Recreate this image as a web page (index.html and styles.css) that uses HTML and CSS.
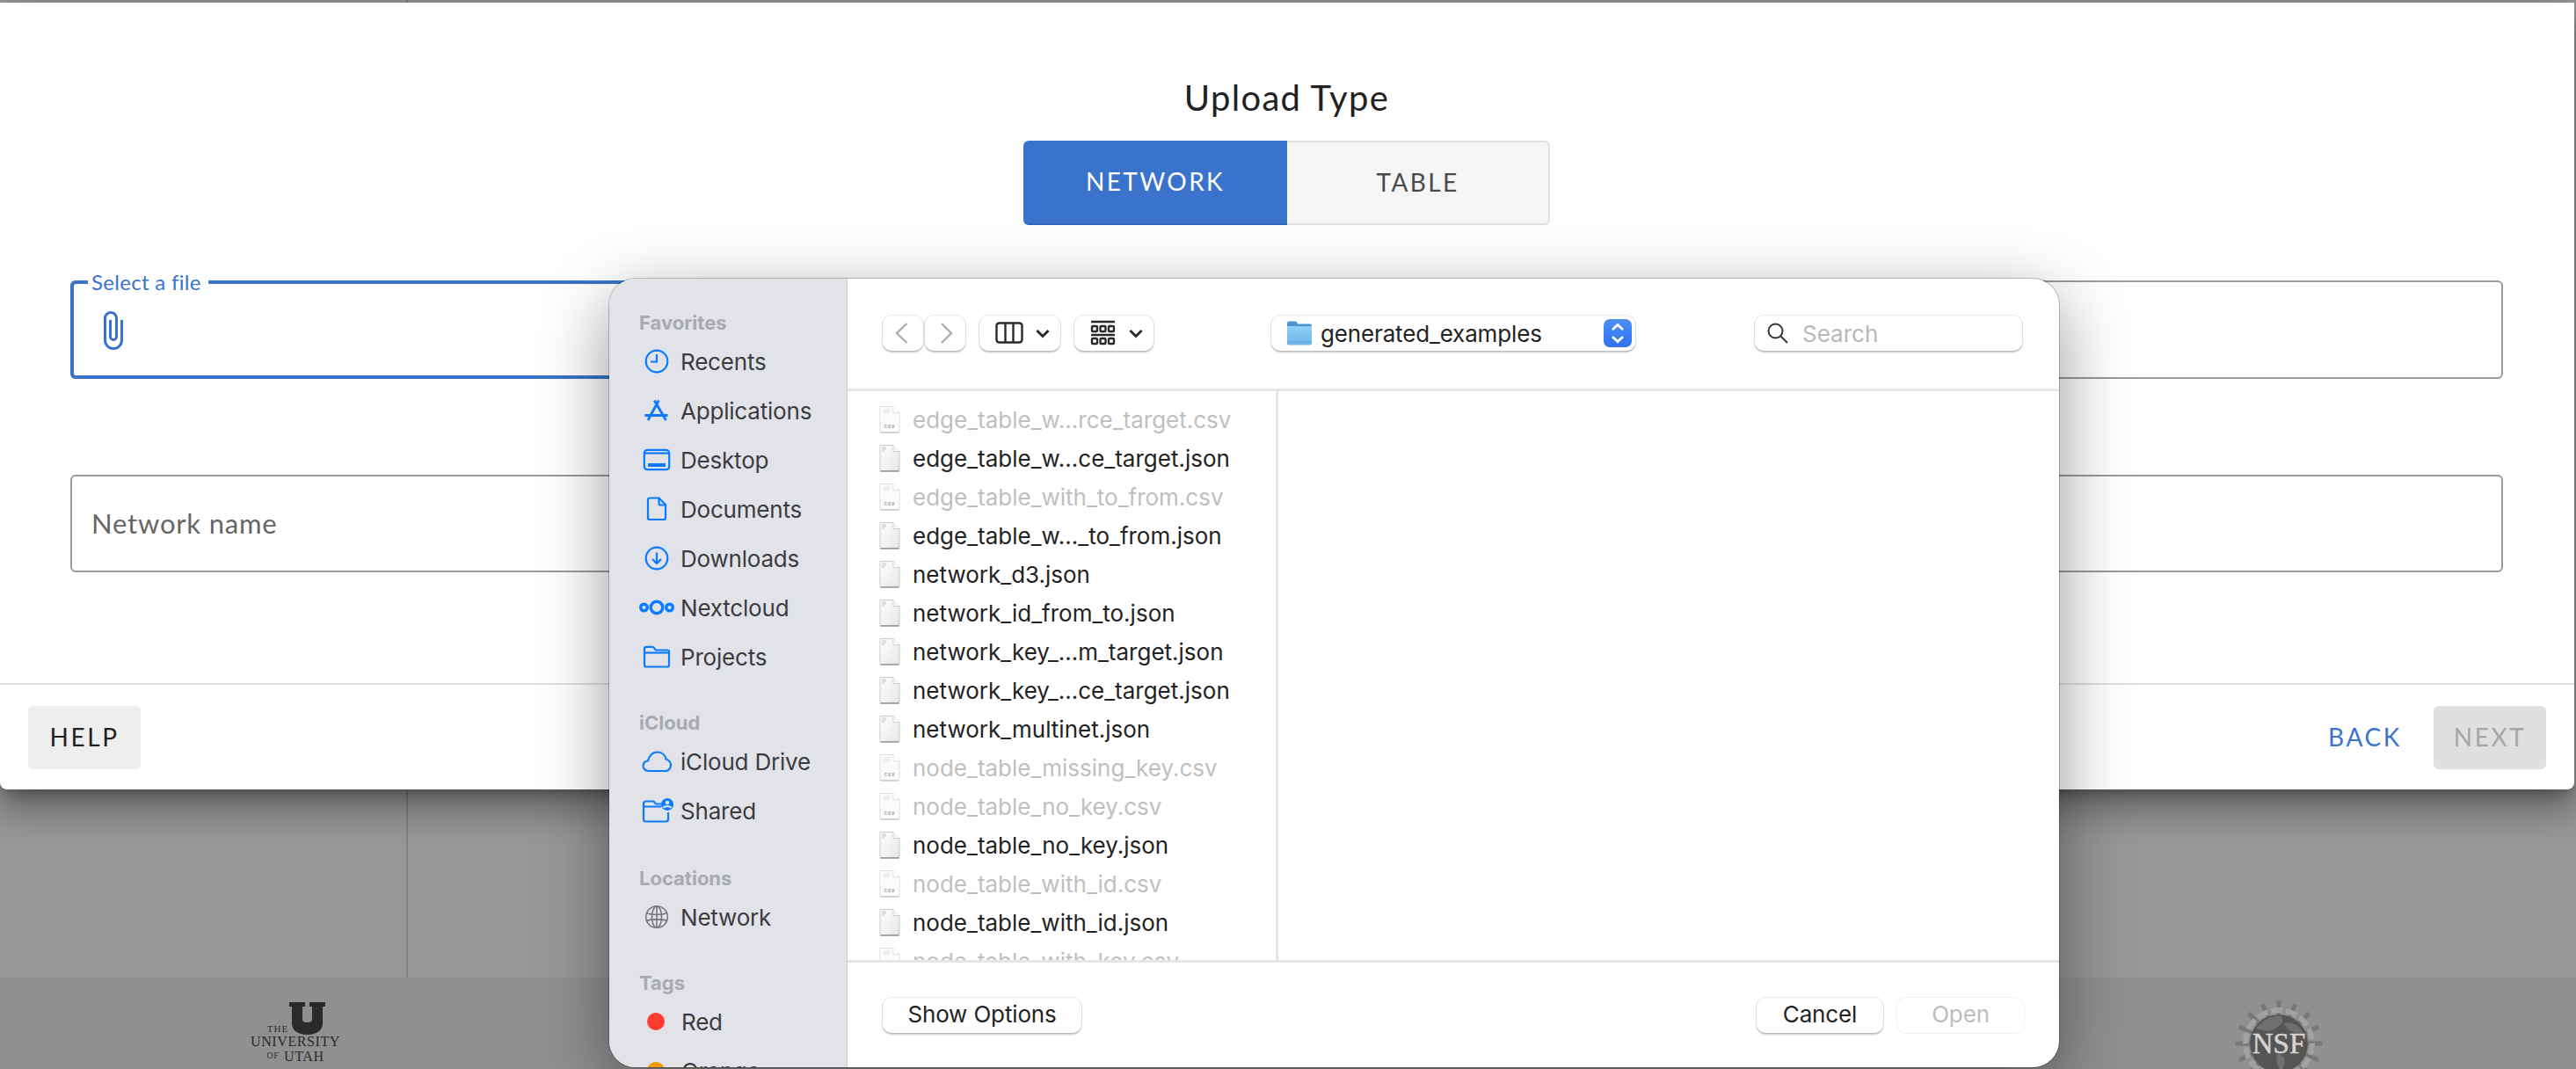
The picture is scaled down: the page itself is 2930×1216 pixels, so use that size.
FILE: index.html
```html
<!DOCTYPE html>
<html lang="en">
<head>
<meta charset="utf-8">
<title>Upload</title>
<link rel="stylesheet" href="styles.css">
</head>
<body>
<svg class="defs" width="0" height="0" aria-hidden="true">
  <defs>
    <linearGradient id="paper" x1="0" y1="0" x2="1" y2="1"><stop offset="0" stop-color="#ffffff"/><stop offset="1" stop-color="#e6e6e6"/></linearGradient>
    <linearGradient id="folderg" x1="0" y1="0" x2="0" y2="1"><stop offset="0" stop-color="#8fd0f7"/><stop offset="1" stop-color="#6db5ec"/></linearGradient>
    <symbol id="doc" viewBox="0 0 24 32">
      <path d="M1 1.500H16L23 8.500V30.500H1Z" fill="url(#paper)" stroke="#c9c9c9" stroke-width="1"/>
      <path d="M16 1.500V8.500H23" fill="#fafafa" stroke="#cfcfcf" stroke-width="1"/>
      <path d="M1.500 31H22.500" stroke="#8e8e8e" stroke-width="1.400"/>
      <path d="M3 4H8M3 6H8M3 8H6" stroke="#c4c4c4" stroke-width="1"/>
    </symbol>
    <symbol id="csv" viewBox="0 0 24 32">
      <path d="M1 1.500H16L23 8.500V30.500H1Z" fill="#fbfbfb" stroke="#dedede" stroke-width="1"/>
      <path d="M16 1.500V8.500H23" fill="#fff" stroke="#e2e2e2" stroke-width="1"/>
      <path d="M1.500 31H22.500" stroke="#c9c9c9" stroke-width="1.400"/>
      <path d="M5 5H13M5 7H13M5 9H11" stroke="#e4e4e4" stroke-width="1"/>
      <text class="csv-tag" x="12" y="26" text-anchor="middle">csv</text>
    </symbol>
  </defs>
</svg>

<div class="app">
  <main class="app-main"><div class="app-rail"></div></main>
  <footer class="app-footer">
    <div class="utah">
      <div class="utah-top">
        <span class="utah-the">THE</span>
        <svg class="utah-u" viewBox="0 0 41 37"><path d="M0 0H18V5H15V20C15 22 17 23 20.500 23C24 23 26 22 26 20V5H23V0H41V5H38V24C38 32 31 37 20.500 37C10 37 3 32 3 24V5H0Z" fill="#2a2a2a"/></svg>
      </div>
      <div class="utah-line">UNIVERSITY</div>
      <div class="utah-line"><small>OF</small> UTAH</div>
    </div>
    <svg class="nsf" viewBox="0 0 100 100">
      <g stroke="#777" stroke-width="5" stroke-linecap="round">
        <path d="M50 3V16M50 97V84M3 50H16M97 50H84M17 17L27 27M83 83L73 73M83 17L73 27M17 83L27 73"/>
        <path d="M32 7L37 18M68 93L63 82M68 7L63 18M32 93L37 82M7 32L18 37M93 68L82 63M7 68L18 63M93 32L82 37"/>
      </g>
      <circle cx="50" cy="50" r="38" fill="none" stroke="#a2a2a2" stroke-width="6" stroke-dasharray="13 4"/>
      <circle cx="50" cy="50" r="33" fill="#555"/>
      <path d="M24 33C32 22 45 17 52 19C58 26 50 30 45 34C38 38 30 34 24 33ZM56 27C64 24 74 30 78 38C70 40 60 36 56 27ZM48 62C55 62 60 68 54 80C50 82 46 72 48 62Z" fill="#6f6f6f"/>
      <text class="nsf-text" x="50" y="61" text-anchor="middle">NSF</text>
    </svg>
  </footer>
</div>

<section class="modal">
  <div class="modal-body">
    <h1 class="title">Upload Type</h1>
    <div class="toggle">
      <button class="toggle-btn is-on">NETWORK</button>
      <button class="toggle-btn">TABLE</button>
    </div>
    <div class="field is-focus">
      <span class="field-label">Select a file</span>
      <svg class="clip" viewBox="0 0 24 24"><path d="M16.500 6V17.500A4 4 0 0 1 12.500 21.500A4 4 0 0 1 8.500 17.500V5A2.500 2.500 0 0 1 11 2.500A2.500 2.500 0 0 1 13.500 5V15.500A1 1 0 0 1 12.500 16.500A1 1 0 0 1 11.500 15.500V6H10V15.500A2.500 2.500 0 0 0 12.500 18A2.500 2.500 0 0 0 15 15.500V5A4 4 0 0 0 11 1A4 4 0 0 0 7 5V17.500A5.500 5.500 0 0 0 12.500 23A5.500 5.500 0 0 0 18 17.500V6H16.500Z"/></svg>
    </div>
    <div class="field field-name">
      <span class="placeholder">Network name</span>
    </div>
  </div>
  <div class="modal-actions">
    <button class="act act-help">HELP</button>
    <button class="act act-back">BACK</button>
    <button class="act act-next">NEXT</button>
  </div>
</section>

<section class="dialog">
  <aside class="side">
    <h2 class="side-head">Favorites</h2>
    <div class="side-item"><svg class="si" viewBox="0 0 40 30"><circle cx="20" cy="15" r="12.300"/><path d="M20 7V15.500H13"/></svg>Recents</div>
    <div class="side-item"><svg class="si si-app" viewBox="0 0 40 30"><path d="M22.300 3.500L10 26M17.300 3.500L30.500 26M6.500 20.500H32.500"/></svg>Applications</div>
    <div class="side-item"><svg class="si" viewBox="0 0 40 30"><rect x="5.800" y="3.800" width="28.400" height="22.400" rx="3.500"/><path d="M6 7.500H34"/><rect class="solid" x="10" y="19" width="20" height="4"/></svg>Desktop</div>
    <div class="side-item"><svg class="si" viewBox="0 0 40 30"><path d="M12 2.500C11 2.500 10 3.500 10 4.500V25C10 26 11 27 12 27H28C29 27 30 26 30 25V10L22.500 2.500Z"/><path d="M22.500 2.500V8.500C22.500 9.500 23.500 10.500 24.500 10.500H30"/></svg>Documents</div>
    <div class="side-item"><svg class="si" viewBox="0 0 40 30"><circle cx="20" cy="15" r="12.300"/><path d="M20 8.500V21M15 16L20 21L25 16"/></svg>Downloads</div>
    <div class="side-item"><svg class="si si-thick" viewBox="0 0 40 30"><circle cx="20" cy="15" r="6.800"/><circle cx="5.500" cy="15" r="3.800"/><circle cx="34.500" cy="15" r="3.800"/></svg>Nextcloud</div>
    <div class="side-item"><svg class="si" viewBox="0 0 40 30"><path d="M6 8V24.500C6 25.500 7 26.500 8 26.500H32C33 26.500 34 25.500 34 24.500V9.500C34 8.500 33 7.500 32 7.500H19L16.500 4.500C16 4 15.500 3.800 15 3.800H8C7 3.800 6 4.800 6 5.800Z"/><path d="M6 10.500H34"/></svg>Projects</div>

    <h2 class="side-head side-gap">iCloud</h2>
    <div class="side-item"><svg class="si" viewBox="0 0 40 30"><path d="M11 26C7 26 4.500 23 4.500 20C4.500 17 7 14.500 10 14.500C11 9 15 4.500 21 4.500C26 4.500 29.500 8 30.500 12.500C33.500 13 36 16 36 19.500C36 23 33.500 26 30 26Z"/></svg>iCloud Drive</div>
    <div class="side-item"><svg class="si" viewBox="0 0 40 30"><path d="M25 7.500H19L16.500 4.500H8C6.500 4.500 5 5.500 5 7V25C5 26.500 6 27.500 7.500 27.500H30C31.500 27.500 33 26.500 33 25V17M5 10.500H25"/><circle class="solid" cx="32" cy="8" r="7"/><circle class="cut" cx="32" cy="6" r="2.300"/><path class="cut-s" d="M27.500 12C29 9.500 35 9.500 36.500 12"/></svg>Shared</div>

    <h2 class="side-head side-gap side-gap-2">Locations</h2>
    <div class="side-item"><svg class="si si-gray" viewBox="0 0 40 30"><circle cx="20" cy="15" r="12.300"/><ellipse cx="20" cy="15" rx="5.500" ry="12.300"/><path d="M8.500 10.500C14 13 26 13 31.500 10.500M8.500 19.500C14 17 26 17 31.500 19.500M20 3V27"/></svg>Network</div>

    <h2 class="side-head side-gap">Tags</h2>
    <div class="side-item"><span class="tag tag-red"></span>Red</div>
    <div class="side-item"><span class="tag tag-orange"></span>Orange</div>
  </aside>

  <div class="pane">
    <div class="tools">
      <div class="tbtn tbtn-nav"><svg class="ti" viewBox="0 0 46 40"><path class="ti-dim" d="M27.500 9L16 20L27.500 31"/></svg></div>
      <div class="tbtn tbtn-nav tbtn-next"><svg class="ti" viewBox="0 0 46 40"><path class="ti-dim" d="M19 9L30 20L19 31"/></svg></div>
      <div class="tbtn tbtn-view">
        <svg class="ti" viewBox="0 0 92 40"><rect x="19.500" y="8.500" width="29" height="22" rx="3"/><path d="M29.500 9V30M38.500 9V30"/><path d="M65.500 17L72 23.500L78.500 17" class="ti-bold"/></svg>
      </div>
      <div class="tbtn tbtn-group">
        <svg class="ti" viewBox="0 0 90 40"><path d="M19 7H46M19 22H46"/><rect x="20" y="12" width="6" height="6" rx="1"/><rect x="29.500" y="12" width="6" height="6" rx="1"/><rect x="39" y="12" width="6" height="6" rx="1"/><rect x="20" y="26" width="6" height="6" rx="1"/><rect x="29.500" y="26" width="6" height="6" rx="1"/><rect x="39" y="26" width="6" height="6" rx="1"/><path d="M63.500 17L70 23.500L76.500 17" class="ti-bold"/></svg>
      </div>
      <div class="tbtn path">
        <svg class="folder" viewBox="0 0 28 28"><path d="M0 3C0 1.500 1 .5 2.500 .5H9C10 .5 11 1 11.500 2.500L12 3.500H26C27 3.500 28 4.500 28 5.500V8H0Z" fill="#4b94d2"/><path d="M0 6H28V25.500C28 26.500 27 27.500 26 27.500H2C1 27.500 0 26.500 0 25.500Z" fill="url(#folderg)"/><path d="M0 24H28" stroke="#5da3dc" stroke-width="1"/></svg>
        <span class="path-name">generated_examples</span>
        <span class="stepper"><svg viewBox="0 0 32 32"><path d="M10 12L16 6.500L22 12M10 20L16 25.500L22 20"/></svg></span>
      </div>
      <div class="tbtn search">
        <svg class="mag" viewBox="0 0 26 26"><circle cx="10.500" cy="10.500" r="8"/><path d="M16.500 16.500L24 24"/></svg>
        <span class="search-ph">Search</span>
      </div>
    </div>

    <div class="browser">
      <div class="files">
        <div class="file is-off"><svg class="ficon"><use href="#csv"/></svg>edge_table_w…rce_target.csv</div>
        <div class="file"><svg class="ficon"><use href="#doc"/></svg>edge_table_w…ce_target.json</div>
        <div class="file is-off"><svg class="ficon"><use href="#csv"/></svg>edge_table_with_to_from.csv</div>
        <div class="file"><svg class="ficon"><use href="#doc"/></svg>edge_table_w…_to_from.json</div>
        <div class="file"><svg class="ficon"><use href="#doc"/></svg>network_d3.json</div>
        <div class="file"><svg class="ficon"><use href="#doc"/></svg>network_id_from_to.json</div>
        <div class="file"><svg class="ficon"><use href="#doc"/></svg>network_key_…m_target.json</div>
        <div class="file"><svg class="ficon"><use href="#doc"/></svg>network_key_…ce_target.json</div>
        <div class="file"><svg class="ficon"><use href="#doc"/></svg>network_multinet.json</div>
        <div class="file is-off"><svg class="ficon"><use href="#csv"/></svg>node_table_missing_key.csv</div>
        <div class="file is-off"><svg class="ficon"><use href="#csv"/></svg>node_table_no_key.csv</div>
        <div class="file"><svg class="ficon"><use href="#doc"/></svg>node_table_no_key.json</div>
        <div class="file is-off"><svg class="ficon"><use href="#csv"/></svg>node_table_with_id.csv</div>
        <div class="file"><svg class="ficon"><use href="#doc"/></svg>node_table_with_id.json</div>
        <div class="file is-off"><svg class="ficon"><use href="#csv"/></svg>node_table_with_key.csv</div>
      </div>
      <div class="preview"></div>
    </div>

    <div class="dlg-foot">
      <div class="pbtn pbtn-options">Show Options</div>
      <div class="pbtn pbtn-action pbtn-cancel">Cancel</div>
      <div class="pbtn pbtn-action pbtn-off">Open</div>
    </div>
  </div>
</section>
</body>
</html>
```

FILE: styles.css
```css
* { box-sizing: border-box; }
html, body { margin: 0; height: 100%; }
body { position: relative; width: 2930px; height: 1216px; overflow: hidden; background: #989898; font-family: "Lato", sans-serif; }
.defs { position: absolute; }
button { font: inherit; border: 0; padding: 0; background: none; }

/* dimmed application behind the modal */
.app { display: flex; flex-direction: column; height: 1216px; }
.app-main { height: 1112px; background: #989898; }
.app-rail { width: 464px; height: 100%; border-right: 2px solid #808080; }
.app-footer { height: 104px; background: #909090; display: flex; justify-content: space-between; align-items: flex-start; padding: 28px 288px 0 286px; }
.utah { width: 100px; color: #2a2a2a; font-family: "Liberation Serif", serif; display: flex; flex-direction: column; align-items: center; }
.utah-top { display: flex; align-items: flex-end; height: 37px; margin-left: 2px; }
.utah-the { font-size: 11px; letter-spacing: 1px; line-height: 13px; margin-right: 1px; }
.utah-u { width: 41px; height: 37px; display: block; }
.utah-line { font-size: 16px; line-height: 16px; letter-spacing: .6px; white-space: nowrap; }
.utah-line small { font-size: 10px; vertical-align: 3px; margin-right: 1px; }
.nsf { width: 100px; height: 100px; margin-top: -3px; }
.nsf-text { font: 400 33px "Liberation Serif", serif; fill: #d4d4d4; stroke: #d4d4d4; stroke-width: .5px; }

/* modal */
.modal { position: absolute; left: 0; top: 3px; width: 2928px; height: 895px; background: #fff; border-radius: 0 0 8px 8px; display: flex; flex-direction: column; box-shadow: 0 11px 15px -7px rgba(0,0,0,.3), 0 24px 38px 3px rgba(0,0,0,.2), 0 9px 46px 8px rgba(0,0,0,.18); }
.modal-body { height: 774px; padding: 83px 81px 0 80px; display: flex; flex-direction: column; align-items: center; }
.title { margin: 0; font-size: 40px; line-height: 50px; font-weight: 400; letter-spacing: 1.3px; color: #222; }
.toggle { display: flex; margin-top: 24px; width: 599px; height: 96px; }
.toggle-btn { flex: 1; font-size: 28px; letter-spacing: 2.400px; color: #4a4a4a; background: #f5f5f5; border: 2px solid #e0e0e0; border-left: 0; border-radius: 0 6px 6px 0; padding-bottom: 2px; }
.toggle-btn.is-on { flex: 0 0 300px; color: #fff; background: #3a73cb; border: 0; border-bottom: 2px solid #3267bb; border-radius: 6px 0 0 6px; padding-bottom: 2px; }
.field { position: relative; width: 100%; height: 112px; margin-top: 63px; border: 2px solid #9a9a9a; border-radius: 6px; display: flex; align-items: center; }
.field.is-focus::before { content: ""; position: absolute; left: -2px; top: -2px; bottom: -2px; width: 1000px; border: 4px solid #3a73cb; border-right: 0; border-radius: 6px 0 0 6px; }
.field-name { height: 111px; margin-top: 109px; padding-left: 22px; }
.field-label { position: absolute; z-index: 1; left: 18px; top: -13px; padding: 0 8px 0 4px; background: #fff; color: #3a73cb; font-size: 24px; line-height: 26px; letter-spacing: .3px; }
.clip { width: 48px; height: 48px; margin-left: 22px; margin-top: 2px; fill: #3a73cb; }
.placeholder { font-size: 31px; letter-spacing: .8px; color: #666; padding-bottom: 2px; }
.modal-actions { height: 121px; border-top: 2px solid #e0e0e0; display: flex; align-items: center; padding: 0 32px; }
.act { height: 72px; font-size: 28px; letter-spacing: 2.600px; border-radius: 6px; padding-bottom: 2px; }
.act-help { width: 128px; background: #eeeeee; color: #222; }
.act-back { margin-left: auto; margin-right: 30px; width: 96px; color: #3a73cb; }
.act-next { width: 128px; background: #e0e0e0; color: #a6a6a6; }

/* native file dialog */
.dialog { position: absolute; left: 693px; top: 317px; width: 1649px; height: 897px; border-radius: 30px; overflow: hidden; background: #fff; display: flex; font-family: "Inter", sans-serif; font-size: 26px; box-shadow: 0 0 0 1px rgba(0,0,0,.22), 0 24px 80px rgba(0,0,0,.42); }
.side { width: 271px; flex: none; height: 100%; background: #e2e3e8; border-right: 1px solid #cdced2; padding: 34px 0 0 34px; overflow: hidden; color: #3c3c3e; }
.side-head { margin: 0; font-size: 22px; line-height: 32px; font-weight: 700; color: #a9aaae; }
.side-gap { margin-top: 31px; }
.side-gap-2 { margin-top: 33px; }
.side-item { height: 56px; display: flex; align-items: center; gap: 7px; white-space: nowrap; letter-spacing: -.2px; }
.si { width: 40px; height: 30px; flex: none; fill: none; stroke: #0a7aff; stroke-width: 2.200; }
.si .solid { fill: #0a7aff; stroke: none; }
.si .cut { fill: #e2e3e8; stroke: none; }
.si .cut-s { stroke: #e2e3e8; }
.si-app { stroke-width: 2.800; }
.si-thick { stroke-width: 3.400; }
.si-gray { stroke: #77777b; stroke-width: 1.600; }
.tag { width: 20px; height: 20px; margin: 0 12px 0 9px; border-radius: 50%; flex: none; }
.tag-red { background: #ff3b30; }
.tag-orange { background: #f09a00; }

.pane { flex: 1; min-width: 0; display: flex; flex-direction: column; }
.tools { height: 128px; flex: none; border-bottom: 3px solid #e6e6e6; display: flex; align-items: center; padding: 0 42px 2px 40px; }
.tbtn { height: 40px; background: #fff; border-radius: 10px; box-shadow: 0 0 0 1px rgba(0,0,0,.07), 0 1.500px 2px rgba(0,0,0,.22); flex: none; }
.tbtn-nav { width: 46px; }
.tbtn-next { margin-left: 2px; }
.tbtn-view { width: 92px; margin-left: 16px; }
.tbtn-group { width: 90px; margin-left: 16px; }
.ti { display: block; width: 100%; height: 40px; fill: none; stroke: #2a2a2a; stroke-width: 2.400; }
.ti-dim { stroke: #adadad; stroke-width: 2.400; }
.ti-bold { stroke-width: 3; }
.path { width: 414px; margin-left: 134px; display: flex; align-items: center; padding-left: 18px; position: relative; color: #232323; }
.folder { width: 28px; height: 28px; flex: none; }
.path-name { margin-left: 10px; letter-spacing: -.15px; padding-top: 2px; }
.stepper { margin-left: auto; margin-right: 4px; width: 32px; height: 32px; border-radius: 7px; background: linear-gradient(#4f8ef7, #2f72f2); }
.stepper svg { display: block; width: 32px; height: 32px; fill: none; stroke: #fff; stroke-width: 2.800; }
.search { width: 304px; margin-left: auto; display: flex; align-items: center; padding-left: 13px; }
.mag { width: 26px; height: 26px; flex: none; fill: none; stroke: #333; stroke-width: 2; }
.search-ph { margin-left: 15px; color: #b8b8b8; padding-top: 2px; }

.browser { flex: 1; min-height: 0; display: flex; }
.files { width: 490px; flex: none; border-right: 3px solid #e6e6e6; padding: 10px 0 0 36px; overflow: hidden; }
.file { height: 44px; display: flex; align-items: center; gap: 14px; color: #232323; white-space: nowrap; }
.file.is-off { color: #bfbfbf; }
.ficon { width: 24px; height: 32px; flex: none; }
.csv-tag { font: 600 6px "Inter", sans-serif; letter-spacing: .7px; fill: #999; }
.preview { flex: 1; }

.dlg-foot { height: 122px; flex: none; border-top: 3px solid #e6e6e6; display: flex; align-items: center; padding: 0 40px; gap: 16px; }
.pbtn { height: 40px; display: flex; align-items: center; justify-content: center; background: #fff; border-radius: 10px; color: #232323; box-shadow: 0 0 0 1px rgba(0,0,0,.07), 0 1.500px 2px rgba(0,0,0,.22); letter-spacing: -.15px; padding-bottom: 2px; }
.pbtn-options { width: 226px; margin-right: auto; }
.pbtn-action { width: 144px; }
.pbtn-off { color: #bdbdbd; box-shadow: 0 0 0 1px rgba(0,0,0,.05); }
```
